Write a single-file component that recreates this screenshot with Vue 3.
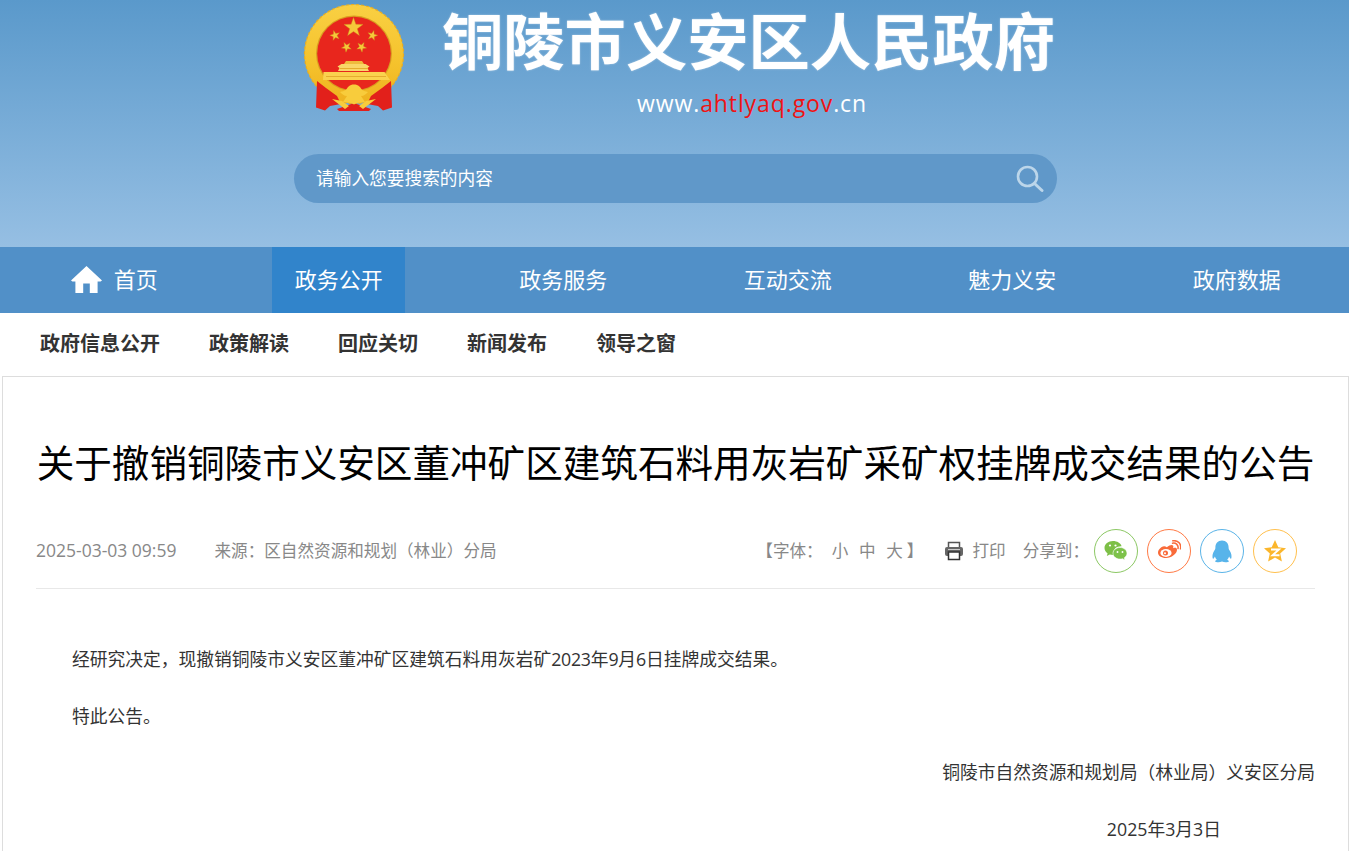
<script setup>
const star = (cx, cy, r, rot = 0) => {
  const pts = [];
  for (let i = 0; i < 10; i++) {
    const rad = i % 2 ? r * 0.4 : r;
    const a = ((-90 + rot + i * 36) * Math.PI) / 180;
    pts.push(`${(cx + rad * Math.cos(a)).toFixed(2)},${(cy + rad * Math.sin(a)).toFixed(2)}`);
  }
  return pts.join(' ');
};
const stars = [star(73.5, 27.5, 10), star(55, 35.5, 5.2, -15), star(92.5, 35.5, 5.2, 15), star(66.5, 47, 5.2, -30), star(81.5, 47, 5.2, 30)];
const navs = ['政务公开', '政务服务', '互动交流', '魅力义安', '政府数据'];
const subs = ['政府信息公开', '政策解读', '回应关切', '新闻发布', '领导之窗'];
</script>

<template>
  <div class="page" lang="zh-CN">
    <header class="banner">
      <div class="banner-inner">
        <div class="brand">
          <svg class="emblem" viewBox="20 0 120 115" width="120" height="115">
            <defs>
              <linearGradient id="gold" x1="0" y1="0" x2="0" y2="1">
                <stop offset="0" stop-color="#f9d043" />
                <stop offset="0.6" stop-color="#f5c22c" />
                <stop offset="1" stop-color="#eeb21f" />
              </linearGradient>
            </defs>
            <circle cx="74" cy="54" r="49.500" fill="url(#gold)" />
            <circle cx="74" cy="54" r="49.500" fill="none" stroke="#e8ad22" stroke-width="1.200" stroke-dasharray="3 2" />
            <circle cx="74" cy="53.500" r="38" fill="#d99d20" />
            <circle cx="74" cy="53.500" r="36.800" fill="#e8261d" />
            <polygon v-for="(p, i) in stars" :key="i" :points="p" fill="#f6c93a" stroke="#c9921c" stroke-width="0.4" />
            <path d="M43.500 72h61l5.500 8H43z" fill="#fad24e" />
            <path d="M58 71l1.500-3-2-1.500 4-2.500h24l4 2.500-2 1.500 1.500 3z" fill="#f9d668" />
            <path d="M64 64l2-3h16l2 3z" fill="#efbb3c" />
            <path d="M60 68h28v1H60zM46 76h60v1H46z" fill="#e5ad2e" />
            <path d="M37 81l9 7 11 8 4 8-11 2-5 4.500-9-3z" fill="#e2201b" />
            <path d="M111 81l-9 7-11 8-4 8 11 2 5 4.500 9-3z" fill="#e2201b" />
            <path d="M57 109l17-6 17 6-2 2H59z" fill="#e2201b" />
            <path d="M60 92c5-1 6-2 8-5 2-2 4-2.500 6-2.500s4 .5 6 2.500c2 3 3 4 8 5-2 2-4 4-7 4l4 6-8 1-3 1.500-3-1.500-8-1 4-6c-3 0-5-2-7-4z" fill="#f8cc3c" />
            <path d="M52 99l10 2 7 5-4 3zM96 99l-10 2-7 5 4 3z" fill="#f8cc3c" />
          </svg>
          <div class="brand-text">
            <h1 class="site-name">铜陵市义安区人民政府</h1>
            <p class="site-url">www.<em>ahtlyaq.gov</em>.cn</p>
          </div>
        </div>
        <div class="search">
          <span class="search-hint">请输入您要搜索的内容</span>
          <svg class="search-icon" viewBox="0 0 28 28" width="28" height="28">
            <circle cx="11.500" cy="11.500" r="9.500" fill="none" stroke="#bcd6ea" stroke-width="2.600" />
            <path d="M18.500 18.500l7.500 7" stroke="#bcd6ea" stroke-width="3" stroke-linecap="round" />
          </svg>
        </div>
      </div>
    </header>

    <nav class="mainnav">
      <div class="nav-cell">
        <a class="nav-link home">
          <svg class="home-icon" viewBox="0 0 31 27" width="31" height="27">
            <path fill="#fff" d="M15.500 0L31 14.400 29.600 15.600H26.600V27H18.800V17.600H12.200V27H4.400V15.600H1.400L0 14.400z" />
          </svg>
          首页
        </a>
      </div>
      <div v-for="(n, i) in navs" :key="n" class="nav-cell">
        <a class="nav-link" :class="{ active: i === 0 }">{{ n }}</a>
      </div>
    </nav>

    <div class="subnav">
      <a v-for="s in subs" :key="s" class="sub-link">{{ s }}</a>
    </div>

    <article class="article">
      <h2 class="title">关于撤销铜陵市义安区董冲矿区建筑石料用灰岩矿采矿权挂牌成交结果的公告</h2>
      <div class="meta">
        <div class="meta-left">
          <span class="date">2025-03-03 09:59</span>
          <span class="source">来源&#xFF1A;区自然资源和规划&#xFF08;林业&#xFF09;分局</span>
        </div>
        <div class="meta-right">
          <span class="fontsize">【字体&#xFF1A;<i>小</i><i>中</i><i>大</i><b>】</b></span>
          <svg class="print-icon" viewBox="0 0 20 20" width="20" height="20">
            <path d="M4.500 6V1.500h11V6" fill="none" stroke="#555" stroke-width="1.500" />
            <rect x="1" y="6" width="18" height="9" rx="2" fill="#666" />
            <rect x="4.500" y="11" width="11" height="7.500" fill="#fff" stroke="#333" stroke-width="1.500" />
            <path d="M4 8.500h12" stroke="#ccc" stroke-width="1" />
          </svg>
          <span class="print">打印</span>
          <span class="share-label">分享到&#xFF1A;</span>
          <span class="share wechat">
            <svg viewBox="0 0 24 22" width="24" height="22">
              <path fill="#7dbf47" d="M9 1C4.200 1 .5 4.200.5 8c0 2.200 1.200 4.100 3.100 5.400L2.800 16l3-1.500c1 .3 2 .4 3.200.4h.9c-.3-.8-.4-1.500-.4-2.300 0-3.600 3.300-6.400 7.400-6.400h.7C16.700 3.200 13.200 1 9 1z" />
              <path fill="#7dc24a" stroke="#fff" stroke-width=".6" d="M16 7.500c-3.900 0-7 2.600-7 5.800s3.100 5.800 7 5.800c.9 0 1.700-.1 2.500-.4l2.500 1.300-.7-2.200c1.700-1.100 2.700-2.700 2.700-4.500 0-3.200-3-5.800-7-5.800z" />
              <circle cx="6" cy="5.500" r="1.100" fill="#fff" /><circle cx="11.500" cy="5.500" r="1.100" fill="#fff" />
              <circle cx="13.500" cy="12" r=".95" fill="#fff" /><circle cx="18.500" cy="12" r=".95" fill="#fff" />
            </svg>
          </span>
          <span class="share weibo">
            <svg viewBox="0 0 24 22" width="24" height="22">
              <path fill="#f96b3a" d="M9.800 7.200c3-2.600 5.400-2.700 6.200-1.700.5.700.4 1.700 0 2.700 2.200-.8 4-.4 4 1.500 0 3.800-5.500 8.300-11 8.300-4.700 0-8-2.300-8-5.500 0-1.800 1.300-3.700 3.300-5.200 2-1.500 4-1.400 5.500-.1z" />
              <ellipse cx="9" cy="13" rx="5.600" ry="3.900" fill="#fff" />
              <circle cx="8.500" cy="13" r="2.500" fill="#f96b3a" />
              <circle cx="8" cy="13.300" r="1" fill="#fff" />
              <path d="M15.500 3.200c3.500-.7 6.200 2 5.500 5.300M15.800 .8c5.500-.8 8.800 3.500 7.700 8" fill="none" stroke="#f96b3a" stroke-width="1.500" stroke-linecap="round" />
            </svg>
          </span>
          <span class="share qq">
            <svg viewBox="0 0 24 24" width="24" height="24">
              <path fill="#58b4ea" d="M12 1.500c-4.200 0-6.600 3-6.600 7 0 1.300-.4 2-1.200 3.200C2.800 13.800 2.200 16.300 2.600 19c.2 1 .8.900 1.300.3.400-.6.800-1.300 1-1.800.3 1.300 1 2.400 1.900 3.200-1 .5-1.700 1-1.700 1.500 0 .7 1.500 1 3.400 1 1.300 0 2.300-.3 3.500-.8 1.200.5 2.200.8 3.500.8 1.900 0 3.400-.3 3.400-1 0-.5-.7-1-1.700-1.500.9-.8 1.600-1.900 1.900-3.200.2.500.6 1.200 1 1.800.5.600 1.100.7 1.300-.3.400-2.700-.2-5.200-1.600-7.300-.8-1.200-1.200-1.900-1.200-3.200 0-4-2.400-7-6.600-7z" />
            </svg>
          </span>
          <span class="share qzone">
            <svg viewBox="0 0 24 24" width="24" height="24">
              <polygon fill="#fbb62c" points="12,1 15.300,8.300 23,9.200 17.200,14.500 18.900,22.500 12,18.500 5.100,22.500 6.800,14.500 1,9.200 8.700,8.300" />
              <path d="M8 10.500h8l-6.500 5.800H16.500" fill="none" stroke="#fff" stroke-width="1.900" />
            </svg>
          </span>
        </div>
      </div>
      <div class="content">
        <p class="indent">经研究决定&#xFF0C;现撤销铜陵市义安区董冲矿区建筑石料用灰岩矿<span class="num">2023</span>年<span class="num">9</span>月<span class="num">6</span>日挂牌成交结果。</p>
        <p class="indent">特此公告。</p>
        <p class="right">铜陵市自然资源和规划局&#xFF08;林业局&#xFF09;义安区分局</p>
        <p class="right date-sign">2025年3月3日</p>
      </div>
    </article>
  </div>
</template>

<style>
html, body { overflow: hidden; background: #fff; }
</style>

<style scoped>
.page {
  font-family: "Open Sans", "Noto Sans CJK SC", sans-serif;
  color: #333;
  width: 1349px;
}
.banner {
  height: 247px;
  background: linear-gradient(#5a99cb, #96bfe3);
}
.banner-inner {
  width: 763px;
  margin: 0 auto;
  transform: translateX(1px);
}
.brand {
  display: flex;
  height: 154px;
  padding-left: 6px;
}
.emblem { flex: none; }
.brand-text {
  margin-left: 22px;
  color: #fff;
}
.site-name {
  margin: 0;
  height: 78px;
  font-size: 61.300px;
  line-height: 78px;
  font-weight: 700;
  white-space: nowrap;
  font-family: "Noto Sans CJK SC", sans-serif;
  text-shadow: 0 0 2px rgba(255, 255, 255, 0.5);
}
.site-url {
  margin: 9px 0 0 195px;
  font-size: 23px;
  line-height: 32px;
  letter-spacing: 0.900px;
  white-space: nowrap;
  color: #fff;
}
.site-url em { font-style: normal; color: #f01313; }
.search {
  height: 49px;
  border-radius: 25px;
  background: #6098c9;
  display: flex;
  align-items: center;
  justify-content: space-between;
  padding: 0 13px 0 22px;
}
.search-hint { color: #fff; font-size: 17.700px; padding-bottom: 4px; }
.mainnav {
  height: 66px;
  background: #5190c8;
  display: grid;
  padding-left: 2px;
  grid-template-columns: repeat(6, 1fr);
}
.nav-cell { display: flex; justify-content: center; }
.nav-link {
  display: flex;
  align-items: center;
  padding: 0 22.500px 4px;
  color: #fff;
  font-size: 22px;
}
.nav-link.active { background: #3184cb; }
.home-icon { margin-right: 12px; margin-top: 3px; }
.subnav {
  height: 63px;
  display: flex;
  align-items: center;
  gap: 49px;
  padding: 0 0 4px 40px;
  box-sizing: border-box;
}
.sub-link {
  font-size: 20px;
  font-weight: 700;
  color: #333;
}
.article {
  margin-left: 2px;
  border: 1px solid #ddd;
  padding: 0 33px;
  height: 600px;
  box-sizing: border-box;
  width: 1347px;
}
.title {
  margin: 0;
  padding-top: 56px;
  font-size: 37.600px;
  line-height: 60px;
  font-weight: 400;
  color: #000;
  text-align: center;
  white-space: nowrap;
}
.meta {
  margin-top: 36px;
  height: 59px;
  border-bottom: 1px solid #e8e8e8;
  display: flex;
  justify-content: space-between;
  color: #888;
  font-size: 16.600px;
}
.meta-left, .meta-right { display: flex; align-items: center; height: 44px; }
.meta-left span, .fontsize, .print, .share-label { padding-bottom: 2px; }
.date { margin-right: 38px; font-size: 17.500px; }
.meta-right { padding-right: 18px; }
.fontsize i { font-style: normal; margin-left: 10.700px; }
.fontsize i:first-child { margin-left: 9px; }
.fontsize b { font-weight: 400; margin-left: 4px; }
.print-icon { margin-left: 21px; }
.print { margin-left: 8px; }
.share-label { margin-left: 17px; margin-right: 5px; }
.share {
  width: 44px;
  height: 44px;
  box-sizing: border-box;
  border-radius: 50%;
  border: 1px solid;
  display: flex;
  align-items: center;
  justify-content: center;
  margin-right: 9px;
}
.share:last-child { margin-right: 0; }
.wechat { border-color: #8cc864; }
.weibo { border-color: #ff7a45; }
.qq { border-color: #5ab4e8; }
.qzone { border-color: #ffc04d; }
.content {
  padding-top: 42px;
  font-size: 17.750px;
  color: #333;
}
.content p {
  margin: 0;
  height: 56.500px;
  line-height: 56.500px;
  white-space: nowrap;
}
.num { letter-spacing: -0.300px; }
.indent { text-indent: 36px; }
.right { text-align: right; }
.date-sign { padding-right: 94px; }
</style>
